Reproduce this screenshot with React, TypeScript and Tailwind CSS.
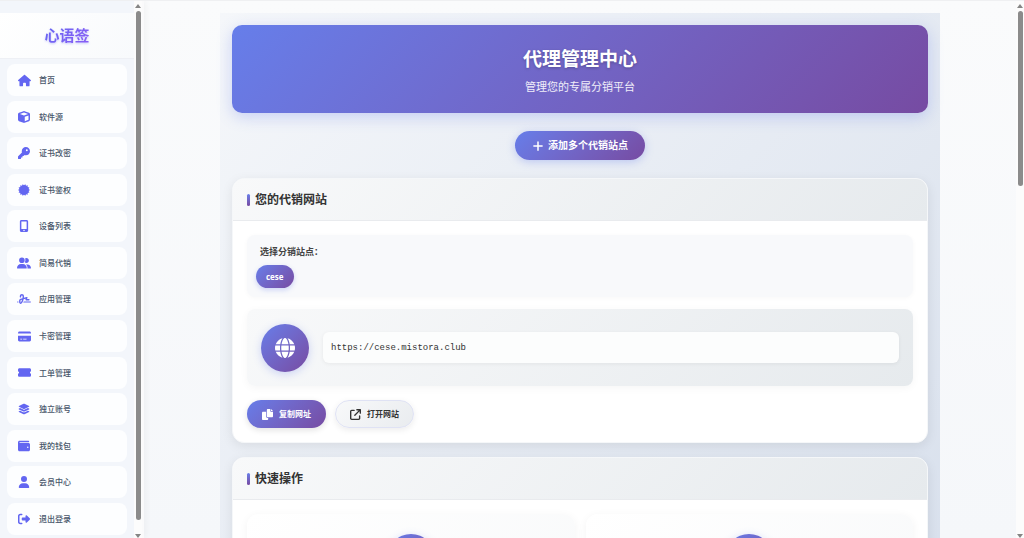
import React from 'react';
import type { IconType } from 'react-icons';
import {
  FaArrowUpRightFromSquare,
  FaCreditCard,
  FaCube,
  FaGlobe,
  FaHouse,
  FaKey,
  FaLayerGroup,
  FaMobileScreenButton,
  FaPlus,
  FaRightFromBracket,
  FaSignature,
  FaTicketSimple,
  FaUser,
  FaUserGroup,
  FaWallet,
} from 'react-icons/fa6';

// Round seal with fourteen teeth
const sealPoints = Array.from({ length: 28 }, (_, i) => {
  const radius = i % 2 === 0 ? 12 : 9.4;
  const angle = (i * Math.PI) / 14;
  return `${(12 + radius * Math.cos(angle)).toFixed(2)},${(12 + radius * Math.sin(angle)).toFixed(2)}`;
}).join(' ');

function SealIcon({ className }: { className?: string }) {
  return (
    <svg viewBox="0 0 24 24" fill="currentColor" className={className}>
      <polygon points={sealPoints} />
    </svg>
  );
}

function CopyIcon({ className }: { className?: string }) {
  return (
    <svg viewBox="0 0 512 512" fill="currentColor" className={className}>
      <path d="M384 96V0H272c-26.5 0-48 21.5-48 48v288c0 26.5 21.5 48 48 48h192c26.5 0 48-21.5 48-48V128h-95.1C398.4 128 384 113.6 384 96zM416 0v96h96L416 0zM192 352V128H48c-26.5 0-48 21.5-48 48v288c0 26.5 21.5 48 48 48h192c26.5 0 48-21.5 48-48v-48h-32c-35.3 0-64-28.7-64-64z" />
    </svg>
  );
}

const navItems: { label: string; icon: IconType | typeof SealIcon; size: string }[] = [
  { label: '首页', icon: FaHouse, size: 'size-[13px]' },
  { label: '软件源', icon: FaCube, size: 'size-3' },
  { label: '证书改密', icon: FaKey, size: 'size-3' },
  { label: '证书鉴权', icon: SealIcon, size: 'size-3' },
  { label: '设备列表', icon: FaMobileScreenButton, size: 'size-3' },
  { label: '简易代销', icon: FaUserGroup, size: 'size-[14px]' },
  { label: '应用管理', icon: FaSignature, size: 'size-[14px]' },
  { label: '卡密管理', icon: FaCreditCard, size: 'size-[13px]' },
  { label: '工单管理', icon: FaTicketSimple, size: 'size-[13px]' },
  { label: '独立账号', icon: FaLayerGroup, size: 'size-3' },
  { label: '我的钱包', icon: FaWallet, size: 'size-3' },
  { label: '会员中心', icon: FaUser, size: 'size-3' },
  { label: '退出登录', icon: FaRightFromBracket, size: 'size-3' },
];

function ScrollTrack({ thumb }: { thumb: string }) {
  return (
    <div aria-hidden="true" className="flex h-full w-2 shrink-0 flex-col items-center justify-between bg-[#fcfcfc] pt-[3px]">
      <div className="flex min-h-0 w-full flex-1 flex-col items-center gap-[3px]">
        <svg viewBox="0 0 6 4" className="h-1 w-1.5 shrink-0 fill-[#858585]"><path d="M3 0 6 4H0Z" /></svg>
        <div className={`w-[5px] rounded-full bg-[#8b8b8b] ${thumb}`} />
      </div>
      <svg viewBox="0 0 6 4" className="h-1 w-1.5 shrink-0 fill-[#858585]"><path d="M3 4 6 0H0Z" /></svg>
    </div>
  );
}

function Sidebar() {
  return (
    <aside className="flex h-full w-36 shrink-0 bg-[#f3f6fb] shadow-[2px_0_6px_rgba(0,0,0,0.04)]">
      <div className="flex min-w-0 flex-1 flex-col">
        <div className="mt-3 flex h-[46px] shrink-0 items-center justify-center border-b border-[#eef0f5] bg-linear-135 from-white to-[#f8fafc]">
          <span className="bg-linear-135 from-[#6366f1] to-[#8b5cf6] bg-clip-text text-[15px] font-bold text-transparent drop-shadow-[0_1px_1px_rgba(99,102,241,0.35)]">
            心语签
          </span>
        </div>
        <nav className="flex flex-1 flex-col justify-between px-[7px] pt-[5px] pb-[3px]">
          {navItems.map(({ label, icon: Icon, size }) => (
            <a
              key={label}
              href="#"
              className="flex h-8 items-center gap-2 rounded-lg bg-[#fdfeff] pl-[10px] text-[8px] font-medium text-[#475569]"
            >
              <span className="flex w-[14px] justify-center text-[#6366f1]"><Icon className={size} /></span>
              {label}
            </a>
          ))}
        </nav>
      </div>
      <ScrollTrack thumb="h-[96%]" />
      <div className="w-0.5 bg-[#fafafb]" />
    </aside>
  );
}

function Card({ title, children }: { title: string; children: React.ReactNode }) {
  return (
    <section className="mb-[14px] overflow-hidden rounded-xl border border-[#f5f7f9] bg-white shadow-[0_3px_12px_rgba(0,0,0,0.08)]">
      <div className="flex h-[42px] items-center gap-[5px] border-b border-[#e9ebee] bg-linear-135 from-[#f8f9fa] to-[#e6eaed] px-[14px]">
        <span className="h-3 w-[3px] rounded-sm bg-linear-to-b from-[#667eea] to-[#764ba2]" />
        <h2 className="text-xs font-bold text-[#333]">{title}</h2>
      </div>
      <div className="p-[14px]">{children}</div>
    </section>
  );
}

function ActionTile() {
  return (
    <div className="flex h-32 justify-center rounded-xl bg-linear-135 from-white to-[#f8f9fa] pt-5 shadow-[0_2px_10px_rgba(0,0,0,0.05)]">
      <span className="size-12 rounded-full bg-linear-135 from-[#667eea] to-[#764ba2] shadow-[0_2px_8px_rgba(102,126,234,0.3)]" />
    </div>
  );
}

export default function App() {
  return (
    <div className="flex h-screen overflow-hidden border-t border-[#eff0f2] bg-linear-to-b from-[#fafbfc] to-[#f5f7fa] font-['Noto_Sans','Noto_Sans_CJK_SC',sans-serif]">
      <Sidebar />
      <main className="min-w-0 flex-1 overflow-hidden pt-3">
        <div className="mx-auto max-w-[720px] bg-linear-135 from-[#f5f7fa] to-[#d3dcea] p-3">
          <header className="flex h-[88px] flex-col items-center justify-center rounded-[10px] bg-linear-135 from-[#667eea] to-[#764ba2] pt-[3px] text-white shadow-[0_4px_15px_rgba(102,126,234,0.3)]">
            <h1 className="text-[19px] leading-7 font-bold [text-shadow:0_1px_3px_rgba(0,0,0,0.25)]">代理管理中心</h1>
            <p className="mt-1 text-[11px] leading-5 text-white/90">管理您的专属分销平台</p>
          </header>

          <div className="flex justify-center py-[18px]">
            <button type="button" className="flex h-[29px] items-center gap-1 rounded-full bg-linear-135 from-[#667eea] to-[#764ba2] px-[17px] text-[10px] font-bold text-white shadow-[0_2px_8px_rgba(102,126,234,0.35)]">
              <FaPlus className="size-3" />
              添加多个代销站点
            </button>
          </div>

          <Card title="您的代销网站">
            <div className="h-[62px] rounded-lg bg-[#f8f9fb] px-[9px] pt-2 shadow-[0_1px_5px_rgba(0,0,0,0.03)]">
              <p className="pl-1 text-[9px] leading-[18px] font-bold text-[#444]">选择分销站点：</p>
              <button type="button" className="mt-1 h-[23px] rounded-full bg-linear-135 from-[#667eea] to-[#764ba2] px-[10px] font-['Open_Sans','Noto_Sans_CJK_SC',sans-serif] text-[8px] font-bold text-white shadow-[0_2px_5px_rgba(102,126,234,0.3)]">
                cese
              </button>
            </div>

            <div className="mt-3 flex h-[77px] items-center gap-[14px] rounded-lg bg-linear-135 from-[#f8f9fa] to-[#e6eaed] px-[14px] shadow-[0_2px_8px_rgba(0,0,0,0.04)]">
              <span className="flex size-12 shrink-0 items-center justify-center rounded-full bg-linear-135 from-[#667eea] to-[#764ba2] text-xl text-white shadow-[0_2px_8px_rgba(102,126,234,0.3)]">
                <FaGlobe />
              </span>
              <input
                aria-label="网站地址"
                readOnly
                value="https://cese.mistora.club"
                className="h-[31px] min-w-0 flex-1 rounded-md bg-[#fcfdfd] px-2 font-['Liberation_Mono',monospace] text-[9px] text-[#333] shadow-[0_1px_4px_rgba(0,0,0,0.06)]"
              />
            </div>

            <div className="mt-[14px] flex gap-[9px]">
              <button type="button" className="flex h-7 items-center gap-1.5 rounded-full bg-linear-135 from-[#667eea] to-[#764ba2] px-[15px] text-[8px] font-bold text-white shadow-[0_2px_6px_rgba(0,0,0,0.12)]">
                <CopyIcon className="size-[11px]" />
                复制网址
              </button>
              <button type="button" className="flex h-7 items-center gap-1.5 rounded-full border border-[#dfe2f4] bg-linear-135 from-[#f8f9fa] to-[#e9ecef] px-[14px] text-[8px] font-bold text-[#333] shadow-[0_2px_6px_rgba(0,0,0,0.08)]">
                <FaArrowUpRightFromSquare className="size-[11px]" />
                打开网站
              </button>
            </div>
          </Card>

          <Card title="快速操作">
            <div className="grid grid-cols-2 gap-[11px]">
              <ActionTile />
              <ActionTile />
              <ActionTile />
              <ActionTile />
            </div>
          </Card>
        </div>
      </main>
      <ScrollTrack thumb="h-[33%]" />
    </div>
  );
}
